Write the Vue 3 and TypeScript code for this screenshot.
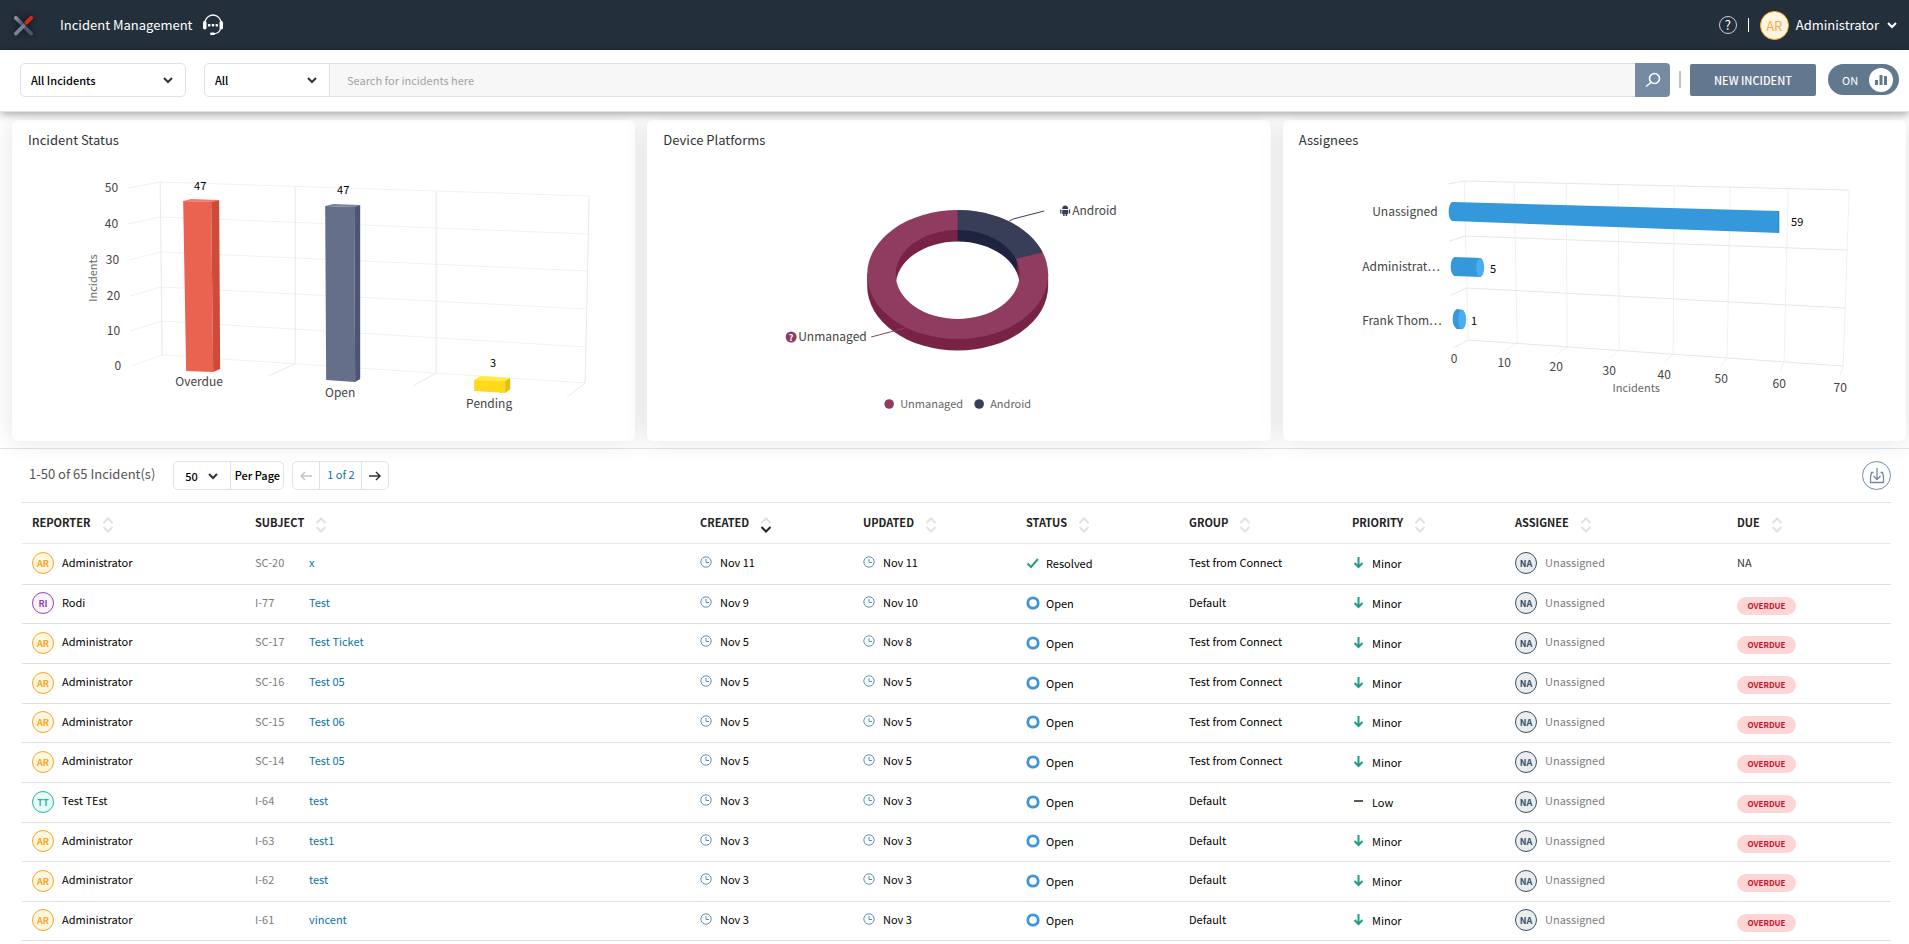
<script setup lang="ts">
import { ref } from 'vue'

interface Person { initials: string; name: string; tone: string }
interface Incident {
  reporter: Person
  id: string
  subject: string
  created: string
  updated: string
  status: 'Resolved' | 'Open'
  group: string
  priority: 'Minor' | 'Low'
  overdue: boolean
}

const admin: Person = { initials: 'AR', name: 'Administrator', tone: 'amber' }
const rodi: Person = { initials: 'RI', name: 'Rodi', tone: 'violet' }
const tester: Person = { initials: 'TT', name: 'Test TEst', tone: 'teal' }

function open(reporter: Person, id: string, subject: string, created: string, updated: string, group: string, priority: 'Minor' | 'Low' = 'Minor'): Incident {
  return { reporter, id, subject, created, updated, status: 'Open', group, priority, overdue: true }
}

const connect = 'Test from Connect'
const incidents: Incident[] = [
  { reporter: admin, id: 'SC-20', subject: 'x', created: 'Nov 11', updated: 'Nov 11', status: 'Resolved', group: connect, priority: 'Minor', overdue: false },
  open(rodi, 'I-77', 'Test', 'Nov 9', 'Nov 10', 'Default'),
  open(admin, 'SC-17', 'Test Ticket', 'Nov 5', 'Nov 8', connect),
  open(admin, 'SC-16', 'Test 05', 'Nov 5', 'Nov 5', connect),
  open(admin, 'SC-15', 'Test 06', 'Nov 5', 'Nov 5', connect),
  open(admin, 'SC-14', 'Test 05', 'Nov 5', 'Nov 5', connect),
  open(tester, 'I-64', 'test', 'Nov 3', 'Nov 3', 'Default', 'Low'),
  open(admin, 'I-63', 'test1', 'Nov 3', 'Nov 3', 'Default'),
  open(admin, 'I-62', 'test', 'Nov 3', 'Nov 3', 'Default'),
  open(admin, 'I-61', 'vincent', 'Nov 3', 'Nov 3', 'Default'),
]

const columns = ['Reporter', 'Subject', 'Created', 'Updated', 'Status', 'Group', 'Priority', 'Assignee', 'Due']
const sortedBy = ref('Created')
const chartsOn = ref(true)
const query = ref('')

// Wall grid of the status chart: tick end, wall corner and far right corner of each level
const levels = [
  { v: 50, p: '128,188 160,182 589,196', x: 118, y: 192 },
  { v: 40, p: '128,224 160,217 588,234', x: 118, y: 228 },
  { v: 30, p: '129,260 161,252 587,271', x: 119, y: 264 },
  { v: 20, p: '130,296 161,287 586,309', x: 120, y: 300 },
  { v: 10, p: '130,331 162,321 586,347', x: 120, y: 335 },
  { v: 0, p: '131,366 162,355 585,383', x: 121, y: 370 },
]
const walls = [
  '160,182 162,355',
  '295,187 295,364 268,376',
  '436,191 436,373 413,386',
  '589,196 585,383 567,397',
]

const lanes = ['1448,184 1464,181 1849,190', '1449,241 1465,236 1847,250', '1451,295 1467,288 1845,308', '1453,348 1468,340 1843,366']
const marks = [
  { v: 0, p: '1464,181 1468,340', x: 1454, y: 363 },
  { v: 10, p: '1514,183 1517,343 1503,352', x: 1504, y: 367 },
  { v: 20, p: '1566,184 1567,347 1556,355', x: 1556, y: 371 },
  { v: 30, p: '1618,185 1619,350 1609,359', x: 1609, y: 375 },
  { v: 40, p: '1674,187 1673,354 1664,362', x: 1664, y: 379 },
  { v: 50, p: '1730,188 1727,357 1720,367', x: 1721, y: 383 },
  { v: 60, p: '1788,189 1784,361 1780,371', x: 1779, y: 388 },
  { v: 70, p: '1849,190 1843,366 1840,375', x: 1840, y: 392 },
]
</script>

<template>
  <div class="page">
    <header class="topbar">
      <svg class="logo" viewBox="0 0 24 24" aria-hidden="true">
        <defs>
          <linearGradient id="arm" x1="0" y1="0" x2="1" y2="1">
            <stop offset="0" stop-color="#8a90a3" /><stop offset="1" stop-color="#3f4757" />
          </linearGradient>
        </defs>
        <g fill="none" stroke-linecap="round" stroke-width="4">
          <path d="M14 14.500L20 20.500" stroke="#4c5465" />
          <path d="M4 4l8 8" stroke="url(#arm)" />
          <path d="M12 12.500l-8 8" stroke="#7b7f98" />
          <path d="M15 9l5-5" stroke="#e2231a" />
        </g>
      </svg>
      <h1>Incident Management</h1>
      <svg class="headset" viewBox="0 0 20 22" aria-hidden="true">
        <g fill="none" stroke="#fff" stroke-width="1.300">
          <path d="M2 9a8 8 0 0 1 16 0" /><path d="M17.500 14.500c-.5 3-3 5-7.500 5.500" />
        </g>
        <g fill="#fff">
          <rect x="0" y="7" width="3.500" height="8.500" rx="1.700" /><rect x="16.500" y="7" width="3.500" height="8.500" rx="1.700" />
          <rect x="7" y="18.500" width="5" height="2.500" rx="1.200" />
          <rect x="5" y="10" width="2.400" height="2.400" rx=".6" /><rect x="8.800" y="10" width="2.400" height="2.400" rx=".6" /><rect x="12.600" y="10" width="2.400" height="2.400" rx=".6" />
        </g>
      </svg>
      <div class="account">
        <button class="help" type="button" aria-label="Help">?</button>
        <span class="bar"></span>
        <button class="user" type="button">
          <span class="face">AR</span>
          Administrator
          <svg class="chev" viewBox="0 0 10 6"><path d="M1 1l4 4 4-4" /></svg>
        </button>
      </div>
    </header>

    <div class="toolbar">
      <span class="pick view">
        <select aria-label="View"><option>All Incidents</option></select>
        <svg class="chev" viewBox="0 0 10 6"><path d="M1 1l4 4 4-4" /></svg>
      </span>
      <form class="search" @submit.prevent>
        <span class="pick scope">
          <select aria-label="Search in"><option>All</option></select>
          <svg class="chev" viewBox="0 0 10 6"><path d="M1 1l4 4 4-4" /></svg>
        </span>
        <input v-model="query" type="text" placeholder="Search for incidents here" aria-label="Search for incidents" />
        <button type="submit" aria-label="Search">
          <svg viewBox="0 0 16 16"><g fill="none" stroke="#fff" stroke-width="1.600"><circle cx="9.500" cy="6.500" r="5" /><path d="M6 10.500l-5 4" /></g></svg>
        </button>
      </form>
      <span class="rule"></span>
      <button class="new" type="button">NEW INCIDENT</button>
      <label class="switch">
        <input v-model="chartsOn" type="checkbox" aria-label="Show charts" />
        <span>{{ chartsOn ? 'ON' : 'OFF' }}</span>
        <span class="knob">
          <svg viewBox="0 0 12 12"><path d="M0 6h3v5H0zM4.500 1h3v10h-3zM9 2h3v9H9z" /></svg>
        </span>
      </label>
    </div>

    <section v-if="chartsOn" class="charts">
      <article class="card">
        <h2>Incident Status</h2>
        <svg viewBox="12 164 623 272" role="img" aria-label="Incident Status">
          <g fill="none" stroke="#e9e9e9">
            <polyline v-for="l in levels" :key="l.v" :points="l.p" stroke="#f1f1f1" />
            <polyline v-for="w in walls" :key="w" :points="w" />
          </g>
          <polygon points="183,201 191,199 219,200 211,202" fill="#f47a6a" />
          <polygon points="183,201 211,202 213,372 186,371" fill="#ea6350" />
          <polygon points="211,202 219,200 220,369 213,372" fill="#d04a39" />
          <polygon points="325,206 333,204 360,205 354,207" fill="#7a84a0" />
          <polygon points="325,206 354,207 355,382 326,380" fill="#656f8a" />
          <polygon points="354,207 360,205 360,379 355,382" fill="#4c5672" />
          <polygon points="474,380 480,376 510,378 505,381" fill="#ffee33" />
          <polygon points="474,380 505,381 505,393 474,391" fill="#ffd91a" />
          <polygon points="505,381 510,378 510,389 505,393" fill="#e5bf00" />
          <g class="axis" text-anchor="end">
            <text v-for="l in levels" :key="l.v" :x="l.x" :y="l.y">{{ l.v }}</text>
          </g>
          <text class="caption" text-anchor="middle" transform="translate(97 278) rotate(-90)">Incidents</text>
          <g class="value" text-anchor="middle">
            <text x="200" y="190">47</text><text x="343" y="194">47</text><text x="493" y="367">3</text>
          </g>
          <g class="axis" text-anchor="middle">
            <text x="199" y="386">Overdue</text><text x="340" y="397">Open</text><text x="489" y="408">Pending</text>
          </g>
        </svg>
      </article>

      <article class="card">
        <h2>Device Platforms</h2>
        <svg viewBox="648 164 623 272" role="img" aria-label="Device Platforms">
          <path d="M868 274v12a90.500 64.500 0 0 0 181 0v-12z" fill="#782346" />
          <ellipse cx="958.500" cy="274.500" rx="90.500" ry="64.500" fill="#903c60" />
          <path d="M958.500 210a90.500 64.500 0 0 1 85 42.500l-25.500 6L958.500 275z" fill="#393e58" />
          <clipPath id="hole"><ellipse cx="958.500" cy="274.500" rx="62" ry="44.500" /></clipPath>
          <g clip-path="url(#hole)">
            <rect x="890" y="225" width="140" height="100" fill="#782346" />
            <path d="M958.500 225h59.500v60h-59.500z" fill="#1e2340" />
            <ellipse cx="958.500" cy="286" rx="62" ry="44.500" fill="#fff" />
          </g>
          <path d="M1010 221l4-2 31-8" fill="none" stroke="#393e58" />
          <path d="M872 337l34-9" fill="none" stroke="#903c60" />
          <path d="M1063 209a3 3.500 0 0 1 6 0zM1063 210h6v4h-6zM1061 209.500h1.300v4H1061zM1069.700 209.500h1.300v4h-1.300zM1064 214h1.500v2H1064zM1066.500 214h1.500v2h-1.500z" fill="#393e58" />
          <circle cx="792" cy="337" r="5.500" fill="#903c60" />
          <text x="792" y="341" class="mark" text-anchor="middle">?</text>
          <g class="axis"><text x="1073" y="215">Android</text><text x="799" y="341">Unmanaged</text></g>
          <circle cx="890" cy="404" r="4.800" fill="#903c60" />
          <circle cx="980" cy="404" r="4.800" fill="#393e58" />
          <g class="caption"><text x="901" y="408">Unmanaged</text><text x="991" y="408">Android</text></g>
        </svg>
      </article>

      <article class="card">
        <h2>Assignees</h2>
        <svg viewBox="1283 164 623 272" role="img" aria-label="Assignees">
          <g fill="none" stroke="#e6e6e6">
            <polyline v-for="m in marks" :key="m.v" :points="m.p" stroke="#f1f1f1" />
            <polyline v-for="l in lanes" :key="l" :points="l" />
          </g>
          <g fill="#3598db">
            <path d="M1452 202L1779 211v22L1452 221q-3.500-2-3.500-9.500t3.500-9.500z" />
            <path d="M1454 257L1481 258v19L1454 276q-3.500-3-3.500-9.500t3.500-9.500z" />
            <path d="M1456.500 309L1463 310v19h-6.500q-4-3-4-10t4-10z" />
          </g>
          <path d="M1778.500 211v22" stroke="#2b86c6" />
          <g fill="#4dadf2"><ellipse cx="1480" cy="267.500" rx="4" ry="9.500" /><ellipse cx="1462" cy="319.500" rx="4" ry="9.500" /></g>
          <g class="axis">
            <text x="1372" y="216">Unassigned</text><text x="1362" y="271">Administrat…</text><text x="1362" y="325">Frank Thom…</text>
          </g>
          <g class="axis" text-anchor="middle"><text v-for="m in marks" :key="m.v" :x="m.x" :y="m.y">{{ m.v }}</text></g>
          <g class="value" text-anchor="middle"><text x="1797" y="226">59</text><text x="1493" y="273">5</text><text x="1474" y="325">1</text></g>
          <text class="caption" x="1636" y="392" text-anchor="middle">Incidents</text>
        </svg>
      </article>
    </section>

    <main>
      <div class="pager">
        <span class="count">1-50 of 65 Incident(s)</span>
        <label class="group per">
          <span class="pick">
            <select aria-label="Per Page"><option>50</option></select>
            <svg class="chev" viewBox="0 0 10 6"><path d="M1 1l4 4 4-4" /></svg>
          </span>
          <span class="unit">Per Page</span>
        </label>
        <nav class="group" aria-label="Pages">
          <button type="button" disabled aria-label="Previous page"><svg class="arrow" viewBox="0 0 12 10"><path d="M12 5H1M5 1L1 5l4 4" /></svg></button>
          <span class="where">1 of 2</span>
          <button type="button" aria-label="Next page"><svg class="arrow" viewBox="0 0 12 10"><path d="M0 5h11M7 1l4 4-4 4" /></svg></button>
        </nav>
        <button class="export" type="button" aria-label="Export">
          <svg viewBox="0 0 16 16"><path d="M4.500 4.500H2.500L1.500 9v5.500h13V9l-1-4.500h-2M8 0v11M4.500 8L8 11.500 11.500 8" /></svg>
        </button>
      </div>

      <table>
        <colgroup>
          <col class="w-reporter" /><col /><col class="w" /><col class="w" /><col class="w" /><col class="w" /><col class="w" /><col class="w-assignee" /><col class="w-due" />
        </colgroup>
        <thead>
          <tr>
            <th v-for="c in columns" :key="c" scope="col">
              <button type="button" @click="sortedBy = c">
                {{ c.toUpperCase() }}
                <svg viewBox="0 0 12 16" :class="{ on: sortedBy === c }"><path d="M1.500 6L6 1.500 10.500 6" /><path class="down" d="M1.500 10L6 14.500 10.500 10" /></svg>
              </button>
            </th>
          </tr>
        </thead>
        <tbody>
          <tr v-for="i in incidents" :key="i.id">
            <td class="who"><div class="cell"><span class="avatar" :class="i.reporter.tone">{{ i.reporter.initials }}</span><span class="name">{{ i.reporter.name }}</span></div></td>
            <td><div class="cell"><span class="id">{{ i.id }}</span><a href="#">{{ i.subject }}</a></div></td>
            <td v-for="(d, n) in [i.created, i.updated]" :key="n">
              <div class="cell date"><svg viewBox="0 0 12 12"><circle cx="6" cy="6" r="5.200" /><path d="M6 3v3.500h3" /></svg>{{ d }}</div>
            </td>
            <td class="low">
              <div class="cell state">
                <svg v-if="i.status === 'Open'" viewBox="0 0 14 14"><circle cx="7" cy="7" r="5.200" fill="none" stroke="#3d95dc" stroke-width="2.800" /></svg>
                <svg v-else viewBox="0 0 14 14"><path d="M1.500 7.500L5 11l7-8" fill="none" stroke="#2a9d80" stroke-width="2" /></svg>
                {{ i.status }}
              </div>
            </td>
            <td>{{ i.group }}</td>
            <td class="low">
              <div class="cell state">
                <svg v-if="i.priority === 'Minor'" viewBox="0 0 14 14"><path d="M6.500 1v10M2.500 7l4 4 4-4" fill="none" stroke="#1f9c84" stroke-width="2" /></svg>
                <svg v-else viewBox="0 0 14 14"><path d="M2 6h9" stroke="#4f5d6d" stroke-width="2" /></svg>
                {{ i.priority }}
              </div>
            </td>
            <td class="who"><div class="cell"><span class="avatar slate">NA</span><span class="name none">Unassigned</span></div></td>
            <td class="due"><span v-if="i.overdue" class="pill">OVERDUE</span><span v-else class="na">NA</span></td>
          </tr>
        </tbody>
      </table>
    </main>
  </div>
</template>

<style>
body { margin: 0; background: #fff; overflow: hidden; }
</style>

<style scoped>
.page { font: 11px/16px "Noto Sans CJK SC", "Noto Sans", sans-serif; color: #000; }
* { box-sizing: border-box; }
button, select, input { font: inherit; color: inherit; }
button { padding: 0; border: 0; background: none; cursor: pointer; }
h1, h2 { margin: 0; font-weight: 400; }
.chev { width: 10px; height: 6px; fill: none; stroke: currentColor; stroke-width: 2; overflow: visible; }

.topbar { display: flex; align-items: center; height: 50px; padding: 0 12px; background: #242f3c; color: #fff; }
.logo { width: 23px; height: 23px; filter: drop-shadow(0 0 3px #0b0f14); }
h1 { margin: 0 11px 0 25px; font-size: 13px; }
.headset { width: 20px; height: 22px; }
.account { display: flex; align-items: center; margin-left: auto; }
.help { width: 18px; height: 18px; border: 1px solid #c9ced4; border-radius: 50%; font-size: 13px; line-height: 16px; }
.bar { width: 1px; height: 14px; margin: 0 11px; background: #fff; }
.user { display: flex; align-items: center; gap: 7px; font-size: 13px; }
.user .chev { margin-left: 1px; }
.face { width: 29px; height: 29px; border: 1px solid #f5a623; border-radius: 50%; background: #fff6e0; color: #f3a952; line-height: 27px; }

.toolbar { position: relative; z-index: 2; display: flex; align-items: center; height: 62px; padding: 0 10px 2px 20px; border-bottom: 1px solid #dfe3e8; background: #fff; box-shadow: 0 2px 8px rgba(0, 0, 0, .35); }
.pick { display: grid; align-items: center; }
.pick > * { grid-area: 1 / 1; }
.pick .chev { justify-self: end; pointer-events: none; color: #333; }
select { appearance: none; width: 100%; height: 100%; border: 0; background: none; font-weight: 500; outline: none; }
.view { width: 166px; height: 34px; margin-right: 18px; border: 1px solid #dfe1e4; border-radius: 5px; }
.view select, .scope select { padding: 0 10px; }
.view .chev, .scope .chev { margin-right: 12px; }
.search { display: flex; flex: 1; height: 34px; }
.scope { width: 126px; border: 1px solid #dfe1e4; border-radius: 5px 0 0 5px; }
.search input { flex: 1; min-width: 0; padding: 0 17px; border: solid #dfe1e4; border-width: 1px 0; background: #f7f7f7; outline: none; }
.search input::placeholder { color: #a3a3a3; opacity: 1; }
.search button { display: grid; place-items: center; width: 35px; background: #768ba1; border-radius: 0 4px 4px 0; }
.search button svg { width: 16px; height: 16px; }
.rule { width: 2px; height: 17px; margin: 0 9px; background: #c4c4c4; }
.new { width: 126px; height: 32px; border-radius: 2px; background: #62788f; color: #fff; font-weight: 500; }
.switch { position: relative; display: flex; align-items: center; justify-content: space-between; width: 71px; height: 31px; margin-left: 12px; padding: 0 6px 0 14px; border-radius: 16px; background: #62788f; color: #fff; }
.switch input { position: absolute; inset: 0; width: 100%; height: 100%; margin: 0; opacity: 0; }
.knob { display: grid; place-items: center; width: 24px; height: 24px; border-radius: 50%; background: #fff; }
.knob svg { width: 12px; height: 12px; fill: #62788f; }

.charts { display: grid; grid-template-columns: repeat(3, 1fr); gap: 12px; padding: 8px 3px 7px 12px; border-bottom: 1px solid #dde5ed; }
.card { display: flex; flex-direction: column; height: 321px; padding-top: 12px; border-radius: 6px; background: #fff; box-shadow: 0 0 26px rgba(0, 0, 0, .11); }
h2 { margin-left: 16px; font-size: 13px; line-height: 16px; color: #333; }
.card > svg { width: 100%; height: 272px; margin-top: 16px; }
.axis { font-size: 12px; fill: #444; }
.caption { font-size: 11px; fill: #666; }
.value { font-size: 11px; fill: #000; }
.mark { font-size: 9px; font-weight: 700; fill: #fff; }

main { padding: 0 18px 0 22px; }
.pager { display: flex; align-items: center; height: 53px; }
.count { margin: 0 18px 0 7px; padding-bottom: 3px; font-size: 13px; color: #555; }
.group { display: flex; height: 29px; margin-right: 8px; border: 1px solid #e0e3e6; border-radius: 5px; }
.per .pick { width: 57px; border-right: 1px solid #e0e3e6; }
.per select { padding: 0 11px; }
.per .chev { margin-right: 12px; }
.unit { width: 52px; text-align: center; line-height: 27px; font-weight: 500; }
.group button { display: grid; place-items: center; width: 26px; }
.arrow { width: 12px; height: 10px; fill: none; stroke: #333; stroke-width: 1.5; }
.group button:disabled .arrow { stroke: #c3c3c3; }
.where { width: 43px; border: solid #e0e3e6; border-width: 0 1px; color: #0c72a6; text-align: center; line-height: 25px; }
.export { display: grid; place-items: center; width: 29px; height: 29px; margin-left: auto; border: 1px solid #74889e; border-radius: 50%; }
.export svg { width: 16px; height: 16px; fill: none; stroke: #74889e; stroke-width: 1.3; }

table { width: 100%; border-collapse: collapse; table-layout: fixed; border-top: 1px solid #e0e3e6; }
.w-reporter { width: 223px; }
.w { width: 163px; }
.w-assignee { width: 222px; }
.w-due { width: 164px; }
th { height: 41px; padding: 0 10px; border-bottom: 1px solid #e6e8ee; text-align: left; }
th button { display: flex; align-items: center; gap: 11px; font-weight: 700; color: #222; }
th svg { width: 12px; height: 16px; margin-top: 3px; fill: none; stroke: #dfe2e5; stroke-width: 2; }
th button { align-items: flex-start; }
th .on .down { stroke: #222; }
td { height: 40px; padding: 0 10px 5px; border-bottom: 1px solid #dfe0e2; white-space: nowrap; }
tbody tr:first-child td { height: 41px; }
tbody tr:nth-child(3n + 2) td, tbody tr:last-child td { height: 39px; }
td.low, td.who { padding-bottom: 2px; }
.cell { display: flex; align-items: center; }
.avatar { width: 22px; height: 22px; border: 1px solid; border-radius: 50%; font-size: 9px; font-weight: 700; line-height: 21px; text-align: center; }
.amber { color: #f5a623; background: #fff6e0; }
.violet { color: #8e44ad; background: #faf5fd; }
.teal { color: #1abc9c; background: #ebf9f6; }
.slate { color: #34506e; background: #ececec; }
.name { margin-left: 8px; padding-bottom: 3px; }
.none, .id { color: #7d7d7d; }
.id { width: 54px; }
a { color: #0c72a6; text-decoration: none; }
.date svg { width: 12px; height: 12px; margin-right: 8px; fill: none; stroke: #5b8fc0; }
.state svg { width: 14px; height: 14px; margin-right: 6px; }
td.due { padding: 3px 10px 0; }
.pill { display: block; width: 59px; height: 18px; border-radius: 9px; background: #fdd5d4; color: #c8102e; font-size: 8px; font-weight: 700; line-height: 18px; text-align: center; }
.na { display: block; padding-bottom: 7px; color: #333; }
</style>
